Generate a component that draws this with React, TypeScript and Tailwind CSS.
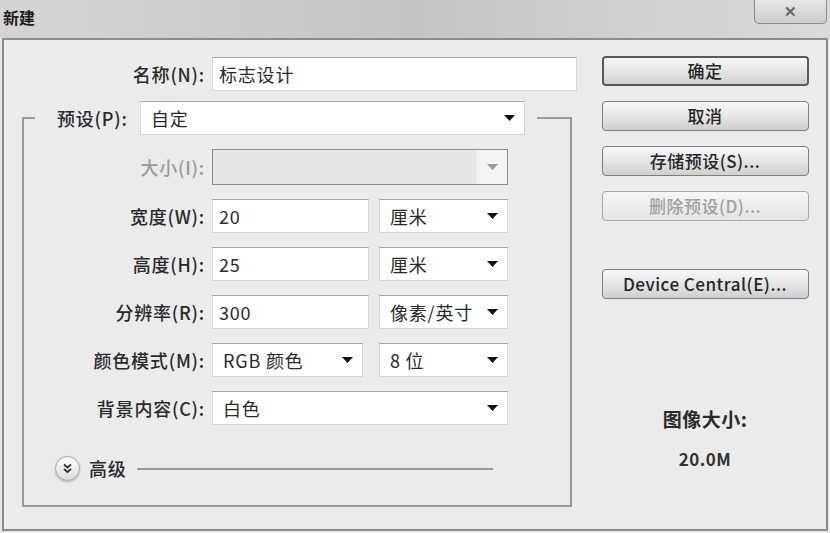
import React from "react";

const font = { fontFamily: '"Noto Sans CJK SC", "Noto Sans", sans-serif' };

function Arrow({ disabled }: { disabled?: boolean }) {
  return (
    <svg width="11" height="6" viewBox="0 0 11 6" className="shrink-0">
      <path d="M0 0 H11 L5.5 6 Z" fill={disabled ? "#9a9a9a" : "#111"} />
    </svg>
  );
}

function Label({ children, w, disabled }: { children: React.ReactNode; w: string; disabled?: boolean }) {
  return (
    <div
      className={`${w} shrink-0 text-right text-[18px] font-medium tracking-[0.8px] ${
        disabled ? "text-[#9a9a9a]" : "text-[#2a2a2a]"
      }`}
    >
      {children}
    </div>
  );
}

function TextBox({ value, w }: { value: string; w: string }) {
  return (
    <div className={`${w} h-[34px] bg-white border border-[#d6d6d6] border-t-[#a8a8a8] flex items-center px-[6px] text-[18px] tracking-[0.8px] text-[#2a2a2a]`}>
      {value}
    </div>
  );
}

function Select({ value, w }: { value: string; w: string }) {
  return (
    <div className={`${w} h-[34px] bg-white border border-[#d6d6d6] border-t-[#a8a8a8] flex items-center justify-between pl-[10px] pr-[9px] text-[18px] tracking-[0.8px] text-[#2a2a2a]`}>
      <span>{value}</span>
      <Arrow />
    </div>
  );
}

function Btn({ children, primary, disabled }: { children: React.ReactNode; primary?: boolean; disabled?: boolean }) {
  return (
    <div
      className={`w-[207px] h-[30px] rounded-[4px] flex items-center justify-center text-[17px] font-medium tracking-[0.5px] bg-gradient-to-b ${
        disabled ? "from-[#f6f6f6] to-[#e4e4e4]" : "from-[#f7f7f7] via-[#e6e6e6] to-[#cfcfcf]"
      } ${primary ? "border-2 border-[#5a5a5a]" : disabled ? "border border-[#a8a8a8]" : "border border-[#7d7d7d]"} ${
        disabled ? "text-[#a0a0a0]" : "text-[#262626]"
      }`}
    >
      {children}
    </div>
  );
}

export default function App() {
  return (
    <div className="w-[830px] h-[533px] bg-[#e9e9e9] overflow-hidden flex flex-col" style={font}>
      <div className="h-[38px] shrink-0 flex justify-between bg-gradient-to-r from-[#d4d4d4] via-[#c4c4c4] to-[#dadada]">
        <div className="pl-[3px] pt-[5px] text-[16px] font-bold text-[#1e1e1e]">新建</div>
        <div className="mr-[3px] w-[73px] h-[24px] rounded-b-[5px] border border-t-0 border-[#8a8a8a] bg-gradient-to-b from-[#e6e6e6] to-[#cdcdcd] flex items-center justify-center text-[15px] font-bold text-[#666]">
          ✕
        </div>
      </div>

      <div className="mx-[2px] h-[493px] border-2 border-[#8c8c8c] bg-[#ebebeb] flex">
        {/* left column */}
        <div className="w-[584px] shrink-0 pt-[17px]">
          <div className="flex items-center gap-[7px] ml-[2px]">
            <Label w="w-[199px]">名称(N):</Label>
            <TextBox value="标志设计" w="w-[365px]" />
          </div>

          <fieldset className="ml-[18px] mt-[10px] w-[550px] h-[406px] border-2 border-[#9c9c9c]">
            <legend className="ml-[11px] pl-[22px] pr-[12px]">
              <div className="flex items-center gap-[7px]">
                <div className="w-[76px] text-[18px] font-medium tracking-[0.8px] text-[#2a2a2a] whitespace-nowrap">预设(P):</div>
                <Select value="自定" w="w-[385px]" />
              </div>
            </legend>

            <div className="flex flex-col gap-[14px] mt-[14px]">
              <div className="flex items-center gap-[7px]">
                <Label w="w-[181px]" disabled>大小(I):</Label>
                <div className="w-[296px] h-[36px] border border-[#8e8e8e] bg-[#e6e6e6] flex justify-end">
                  <div className="w-[30px] bg-[#f3f3f3] flex items-center justify-center">
                    <Arrow disabled />
                  </div>
                </div>
              </div>

              <div className="flex items-center gap-[7px]">
                <Label w="w-[181px]">宽度(W):</Label>
                <TextBox value="20" w="w-[157px]" />
                <div className="ml-[3px]">
                  <Select value="厘米" w="w-[129px]" />
                </div>
              </div>

              <div className="flex items-center gap-[7px]">
                <Label w="w-[181px]">高度(H):</Label>
                <TextBox value="25" w="w-[157px]" />
                <div className="ml-[3px]">
                  <Select value="厘米" w="w-[129px]" />
                </div>
              </div>

              <div className="flex items-center gap-[7px]">
                <Label w="w-[181px]">分辨率(R):</Label>
                <TextBox value="300" w="w-[157px]" />
                <div className="ml-[3px]">
                  <Select value="像素/英寸" w="w-[129px]" />
                </div>
              </div>

              <div className="flex items-center gap-[7px]">
                <Label w="w-[181px]">颜色模式(M):</Label>
                <Select value="RGB 颜色" w="w-[151px]" />
                <div className="ml-[9px]">
                  <Select value="8 位" w="w-[129px]" />
                </div>
              </div>

              <div className="flex items-center gap-[7px]">
                <Label w="w-[181px]">背景内容(C):</Label>
                <Select value="白色" w="w-[296px]" />
              </div>
            </div>

            <div className="flex items-center mt-[30px] ml-[31px]">
              <div className="w-[25px] h-[25px] rounded-full border border-[#a5a5a5] bg-gradient-to-b from-white to-[#dcdcdc] shadow-[0_1px_2px_rgba(0,0,0,0.25)] flex items-center justify-center">
                <svg width="11" height="11" viewBox="0 0 11 11">
                  <path d="M2 1.5 L5.5 4.5 L9 1.5 M2 6 L5.5 9 L9 6" fill="none" stroke="#333" strokeWidth="1.8" />
                </svg>
              </div>
              <div className="ml-[9px] text-[18px] font-medium tracking-[0.8px] text-[#2a2a2a]">高级</div>
              <div className="ml-[10px] w-[356px] h-[2px] bg-[#9a9a9a]" />
            </div>
          </fieldset>
        </div>

        {/* right column */}
        <div className="flex-1 flex flex-col items-center pt-[16px] pr-[4px]">
          <div className="flex flex-col gap-[15px]">
            <Btn primary>确定</Btn>
            <Btn>取消</Btn>
            <Btn>存储预设(S)...</Btn>
            <Btn disabled>删除预设(D)...</Btn>
          </div>
          <div className="mt-[48px]">
            <Btn>Device Central(E)...</Btn>
          </div>
          <div className="mt-[106px] text-[19px] font-bold tracking-[0.5px] text-[#2a2a2a]">图像大小:</div>
          <div className="mt-[12px] text-[17px] font-bold tracking-[0.5px] text-[#333]">20.0M</div>
        </div>
      </div>
    </div>
  );
}
